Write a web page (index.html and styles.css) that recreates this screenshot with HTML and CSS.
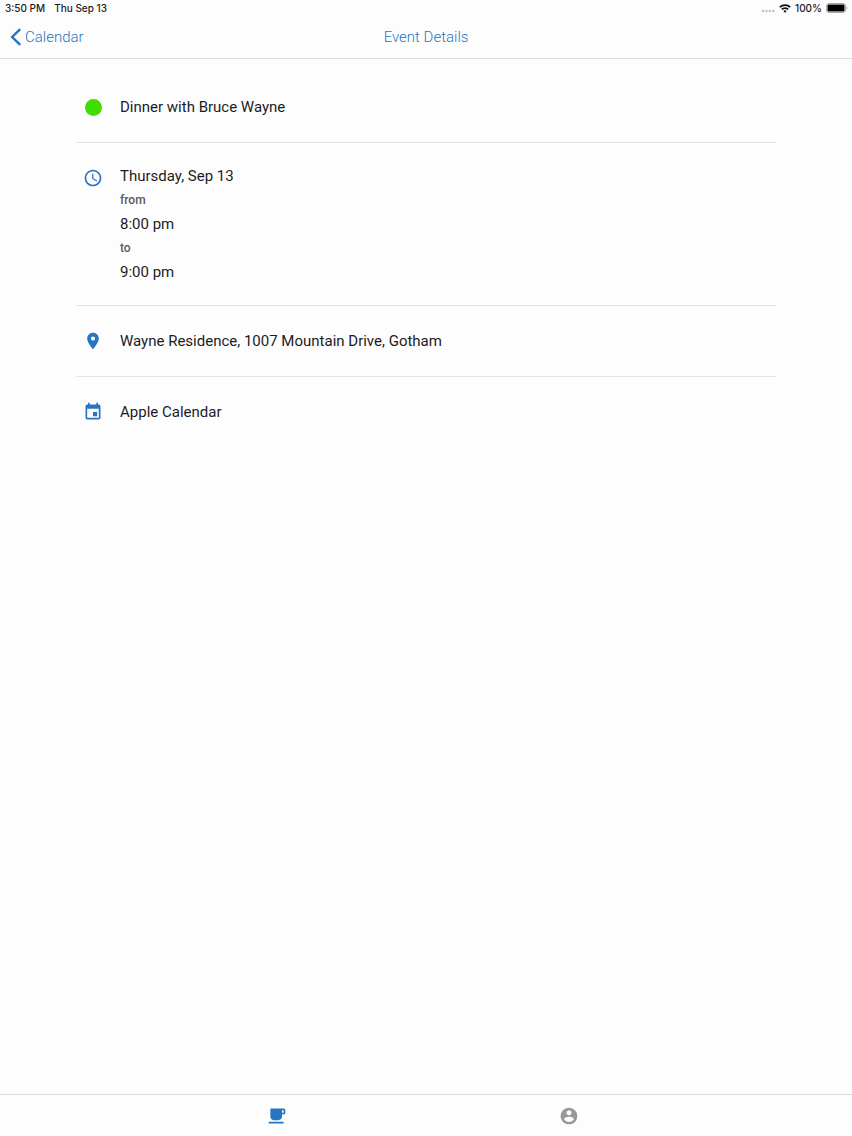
FILE: index.html
```html
<!DOCTYPE html>
<html lang="en">
<head>
  <meta charset="UTF-8">
  <meta name="viewport" content="width=device-width, initial-scale=1.0">
  <title>Event Details</title>
  <link rel="stylesheet" href="styles.css">
</head>
<body>
  <div class="status-bar">
    <div class="status-left">
      <span>3:50 PM</span>
      <span>Thu Sep 13</span>
    </div>
    <div class="status-right">
      <svg class="signal" viewBox="0 0 14 4" fill="#c4c4c6">
        <circle cx="2" cy="2" r="1.3"/>
        <circle cx="5.4" cy="2" r="1.3"/>
        <circle cx="8.8" cy="2" r="1.3"/>
        <circle cx="12.2" cy="2" r="1.3"/>
      </svg>
      <svg class="wifi" viewBox="0 0 12 9" fill="none" stroke="#111" stroke-width="1.8">
        <path d="M.8 3.2a7.4 7.4 0 0 1 10.4 0"/>
        <path d="M2.8 5.4a4.5 4.5 0 0 1 6.4 0"/>
        <path d="M6 8.8L4.3 7.1a2.4 2.4 0 0 1 3.4 0z" fill="#111" stroke="none"/>
      </svg>
      <span>100%</span>
      <svg class="battery" viewBox="0 0 22 10">
        <rect x=".5" y=".5" width="19" height="9" rx="2.4" fill="#fff" stroke="#aaa"/>
        <rect x="1.5" y="1.5" width="17" height="7" rx="1.2" fill="#000"/>
        <path d="M20.5 3.5v3q1-.4 1-1.5t-1-1.5z" fill="#aaa"/>
      </svg>
    </div>
  </div>

  <header class="nav-bar">
    <a class="back-link" href="#">
      <svg class="back-icon" viewBox="0 0 12 18" fill="none" stroke="#2675bf" stroke-width="2.4">
        <path d="M10.2 1.2L2.2 9l8 7.8"/>
      </svg>
      Calendar
    </a>
    <h1>Event Details</h1>
  </header>

  <main class="event">
    <section class="event-row">
      <div class="row-icon"><span class="color-dot"></span></div>
      <p>Dinner with Bruce Wayne</p>
    </section>

    <section class="event-row">
      <div class="row-icon">
        <svg class="icon" viewBox="0 0 24 24">
          <path d="M11.99 2C6.47 2 2 6.48 2 12s4.47 10 9.99 10C17.52 22 22 17.52 22 12S17.52 2 11.99 2zM12 20c-4.42 0-8-3.58-8-8s3.58-8 8-8 8 3.58 8 8-3.58 8-8 8zm.5-13H11v6l5.25 3.15.75-1.23-4.5-2.67z"/>
        </svg>
      </div>
      <div>
        <p>Thursday, Sep 13</p>
        <p class="small">from</p>
        <p>8:00 pm</p>
        <p class="small">to</p>
        <p>9:00 pm</p>
      </div>
    </section>

    <section class="event-row">
      <div class="row-icon">
        <svg class="icon" viewBox="0 0 24 24">
          <path d="M12 2C8.13 2 5 5.13 5 9c0 5.25 7 13 7 13s7-7.75 7-13c0-3.87-3.13-7-7-7zm0 9.5c-1.38 0-2.5-1.12-2.5-2.5s1.12-2.5 2.5-2.5 2.5 1.12 2.5 2.5-1.12 2.5-2.5 2.5z"/>
        </svg>
      </div>
      <p>Wayne Residence, 1007 Mountain Drive, Gotham</p>
    </section>

    <section class="event-row">
      <div class="row-icon">
        <svg class="icon" viewBox="0 0 24 24">
          <path d="M17 12h-5v5h5v-5zM16 1v2H8V1H6v2H5c-1.11 0-1.99.9-1.99 2L3 19c0 1.1.89 2 2 2h14c1.1 0 2-.9 2-2V5c0-1.1-.9-2-2-2h-1V1h-2zm3 18H5V8h14v11z"/>
        </svg>
      </div>
      <p>Apple Calendar</p>
    </section>
  </main>

  <nav class="tab-bar">
    <a class="tab active" href="#" aria-label="Home">
      <svg class="icon" viewBox="0 0 24 24">
        <path d="M20 3H4v10c0 2.21 1.79 4 4 4h6c2.21 0 4-1.79 4-4v-3h2c1.11 0 2-.9 2-2V5c0-1.11-.89-2-2-2zm0 5h-2V5h2v3zM2 21h18v-2H2v2z"/>
      </svg>
    </a>
    <a class="tab" href="#" aria-label="Profile">
      <svg class="icon" viewBox="0 0 24 24">
        <path d="M12 2C6.48 2 2 6.48 2 12s4.48 10 10 10 10-4.48 10-10S17.52 2 12 2zm0 3c1.66 0 3 1.34 3 3s-1.34 3-3 3-3-1.34-3-3 1.34-3 3-3zm0 14.2c-2.5 0-4.71-1.28-6-3.22.03-1.99 4-3.08 6-3.08 1.99 0 5.97 1.09 6 3.08-1.29 1.94-3.5 3.22-6 3.22z"/>
      </svg>
    </a>
  </nav>
</body>
</html>
```

FILE: styles.css
```css
* {
  box-sizing: border-box;
}

body {
  margin: 0;
  min-height: 100vh;
  display: flex;
  flex-direction: column;
  font-family: Roboto, 'Liberation Sans', sans-serif;
  font-size: 15px;
  line-height: 24px;
  color: #1c1c1f;
  background-color: #fefdfe;
}

p, h1 {
  margin: 0;
}

a {
  color: inherit;
  text-decoration: none;
}

svg {
  display: block;
}

/* Status bar */
.status-bar {
  display: flex;
  justify-content: space-between;
  padding: 0 4px 0 5px;
  font-family: Inter, 'Liberation Sans', sans-serif;
  font-size: 10px;
  font-weight: 500;
  line-height: 16px;
}

.status-left {
  display: flex;
  gap: 9px;
}

.status-right {
  display: flex;
  align-items: center;
  gap: 4px;
}

.signal {
  width: 14px;
  height: 4px;
  margin-top: 6px;
}

.wifi {
  width: 12px;
  height: 9px;
}

.battery {
  width: 22px;
  height: 10px;
}

/* Navigation bar */
.nav-bar {
  display: grid;
  grid-template-columns: 1fr auto 1fr;
  align-items: center;
  height: 43px;
  padding: 0 10px;
  border-bottom: 1px solid #dcdcde;
  color: #2675bf;
}

.nav-bar h1 {
  font-size: 15px;
  font-weight: 300;
}

.back-link {
  display: flex;
  align-items: center;
  gap: 3px;
  font-weight: 300;
}

.back-icon {
  width: 12px;
  height: 18px;
}

/* Event */
.event {
  flex: 1;
  width: 100%;
  max-width: 700px;
  margin: 0 auto;
  padding-top: 13px;
}

.event-row {
  display: flex;
  gap: 13px;
  padding: 21px 3px;
  border-bottom: 1px solid #e6e2ea;
}

.event-row:last-child {
  border-bottom: none;
}

.event-row > p {
  align-self: center;
}

.row-icon {
  display: flex;
  flex-shrink: 0;
  align-items: center;
  justify-content: center;
  width: 28px;
  height: 28px;
}

.icon {
  width: 20px;
  height: 20px;
  fill: #2675bf;
}

.color-dot {
  width: 17px;
  height: 17px;
  border-radius: 50%;
  background-color: #40de00;
}

.small {
  font-size: 12px;
  font-weight: 500;
  color: #59595d;
}

/* Tab bar */
.tab-bar {
  display: flex;
  justify-content: center;
  height: 42px;
  padding-right: 6px;
  border-top: 1px solid #dcdcde;
}

.tab {
  display: flex;
  align-items: center;
  justify-content: center;
  width: 292px;
}

.tab .icon {
  fill: #98989c;
}

.tab.active .icon {
  fill: #2675bf;
}
```
